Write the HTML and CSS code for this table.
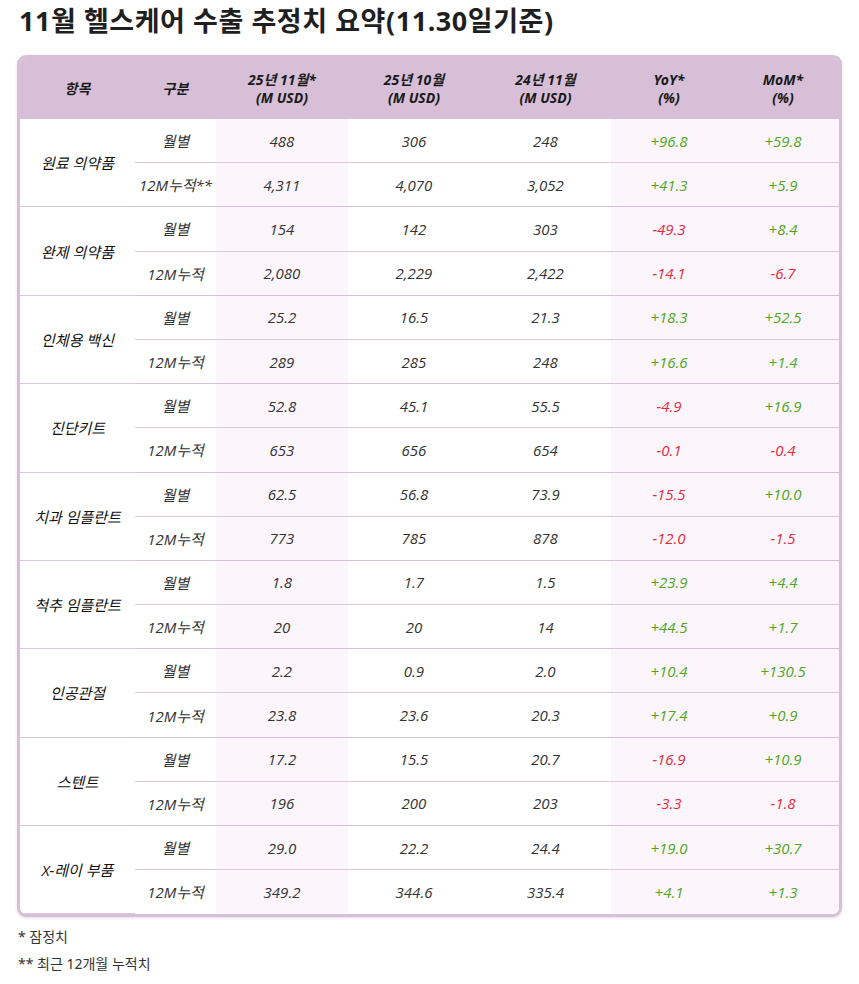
FILE: index.html
```html
<!DOCTYPE html>
<html lang="ko">
<head>
<meta charset="utf-8">
<link rel="stylesheet" href="styles.css">
</head>
<body>
<h1 class="title">11월 헬스케어 수출 추정치 요약(11.30일기준)</h1>
<div class="table-wrap">
<table class="data">
<colgroup>
<col class="c1"><col class="c2"><col class="c3"><col class="c4"><col class="c5"><col class="c6"><col class="c7">
</colgroup>
<thead>
<tr><th>항목</th><th>구분</th><th>25년 11월*<br>(M USD)</th><th>25년 10월<br>(M USD)</th><th>24년 11월<br>(M USD)</th><th>YoY*<br>(%)</th><th>MoM*<br>(%)</th></tr>
</thead>
<tbody>
<tr><td class="item" rowspan="2">원료 의약품</td><td class="kind">월별</td><td class="sh">488</td><td>306</td><td>248</td><td class="sh up">+96.8</td><td class="sh up">+59.8</td></tr>
<tr class="last"><td class="kind">12M누적**</td><td class="sh">4,311</td><td>4,070</td><td>3,052</td><td class="sh up">+41.3</td><td class="sh up">+5.9</td></tr>
<tr><td class="item" rowspan="2">완제 의약품</td><td class="kind">월별</td><td class="sh">154</td><td>142</td><td>303</td><td class="sh dn">-49.3</td><td class="sh up">+8.4</td></tr>
<tr class="last"><td class="kind">12M누적</td><td class="sh">2,080</td><td>2,229</td><td>2,422</td><td class="sh dn">-14.1</td><td class="sh dn">-6.7</td></tr>
<tr><td class="item" rowspan="2">인체용 백신</td><td class="kind">월별</td><td class="sh">25.2</td><td>16.5</td><td>21.3</td><td class="sh up">+18.3</td><td class="sh up">+52.5</td></tr>
<tr class="last"><td class="kind">12M누적</td><td class="sh">289</td><td>285</td><td>248</td><td class="sh up">+16.6</td><td class="sh up">+1.4</td></tr>
<tr><td class="item" rowspan="2">진단키트</td><td class="kind">월별</td><td class="sh">52.8</td><td>45.1</td><td>55.5</td><td class="sh dn">-4.9</td><td class="sh up">+16.9</td></tr>
<tr class="last"><td class="kind">12M누적</td><td class="sh">653</td><td>656</td><td>654</td><td class="sh dn">-0.1</td><td class="sh dn">-0.4</td></tr>
<tr><td class="item" rowspan="2">치과 임플란트</td><td class="kind">월별</td><td class="sh">62.5</td><td>56.8</td><td>73.9</td><td class="sh dn">-15.5</td><td class="sh up">+10.0</td></tr>
<tr class="last"><td class="kind">12M누적</td><td class="sh">773</td><td>785</td><td>878</td><td class="sh dn">-12.0</td><td class="sh dn">-1.5</td></tr>
<tr><td class="item" rowspan="2">척추 임플란트</td><td class="kind">월별</td><td class="sh">1.8</td><td>1.7</td><td>1.5</td><td class="sh up">+23.9</td><td class="sh up">+4.4</td></tr>
<tr class="last"><td class="kind">12M누적</td><td class="sh">20</td><td>20</td><td>14</td><td class="sh up">+44.5</td><td class="sh up">+1.7</td></tr>
<tr><td class="item" rowspan="2">인공관절</td><td class="kind">월별</td><td class="sh">2.2</td><td>0.9</td><td>2.0</td><td class="sh up">+10.4</td><td class="sh up">+130.5</td></tr>
<tr class="last"><td class="kind">12M누적</td><td class="sh">23.8</td><td>23.6</td><td>20.3</td><td class="sh up">+17.4</td><td class="sh up">+0.9</td></tr>
<tr><td class="item" rowspan="2">스텐트</td><td class="kind">월별</td><td class="sh">17.2</td><td>15.5</td><td>20.7</td><td class="sh dn">-16.9</td><td class="sh up">+10.9</td></tr>
<tr class="last"><td class="kind">12M누적</td><td class="sh">196</td><td>200</td><td>203</td><td class="sh dn">-3.3</td><td class="sh dn">-1.8</td></tr>
<tr><td class="item" rowspan="2">X-레이 부품</td><td class="kind">월별</td><td class="sh">29.0</td><td>22.2</td><td>24.4</td><td class="sh up">+19.0</td><td class="sh up">+30.7</td></tr>
<tr class="last end"><td class="kind">12M누적</td><td class="sh">349.2</td><td>344.6</td><td>335.4</td><td class="sh up">+4.1</td><td class="sh up">+1.3</td></tr>
</tbody>
</table>
</div>
<div class="notes">
<p>* 잠정치</p>
<p>** 최근 12개월 누적치</p>
</div>
</body>
</html>
```

FILE: styles.css
```css
html, body {
  margin: 0;
  padding: 0;
  background: #ffffff;
}
body {
  padding: 0 17px;
  font-family: "Open Sans", "Noto Sans CJK KR", sans-serif;
  color: #333333;
}
.title {
  margin: 0;
  padding-top: 3px;
  height: 52px;
  font-family: "Noto Sans", "Noto Sans CJK KR", sans-serif;
  font-size: 27px;
  line-height: 36px;
  font-weight: 700;
  color: #1f1f1f;
  padding-left: 2px;
  letter-spacing: 0.55px;
}
.table-wrap {
  width: 819px;
  border: 3px solid #d8bfd8;
  border-radius: 9px;
  overflow: hidden;
  box-shadow: 0 1px 3px rgba(150, 110, 150, 0.25);
}
.data {
  width: 819px;
  border-collapse: collapse;
  table-layout: fixed;
}
.c1 { width: 115px; }
.c2 { width: 81px; }
.c3 { width: 132px; }
.c4 { width: 132px; }
.c5 { width: 131px; }
.c6 { width: 116px; }
.c7 { width: 112px; }
.data th {
  background: #d8bfd8;
  height: 61px;
  padding: 0;
  font-family: "Noto Sans", "Noto Sans CJK KR", sans-serif;
  font-size: 14px;
  line-height: 18px;
  font-weight: 700;
  font-style: italic;
  color: #1a1a1a;
  text-align: center;
  vertical-align: middle;
}
.data td {
  height: 43.2px;
  padding: 0;
  text-align: center;
  vertical-align: middle;
  font-size: 15px;
  font-style: italic;
  color: #333333;
  border-bottom: 1px solid #dcc8dc;
}
.data td.item {
  color: #111111;
}
.data td.sh {
  background: #fcf6fc;
}
.data td.up {
  color: #4ea61c;
}
.data td.dn {
  color: #e8293a;
}
.data tr.last td {
  border-bottom: 1px solid #d6c0d6;
}
.data tr.end td {
  border-bottom: none;
}
.notes {
  padding-top: 6px;
  padding-left: 1px;
}
.notes p {
  margin: 0;
  font-size: 14px;
  line-height: 27px;
  color: #333333;
  font-family: "Noto Sans", "Noto Sans CJK KR", sans-serif;
}
```
